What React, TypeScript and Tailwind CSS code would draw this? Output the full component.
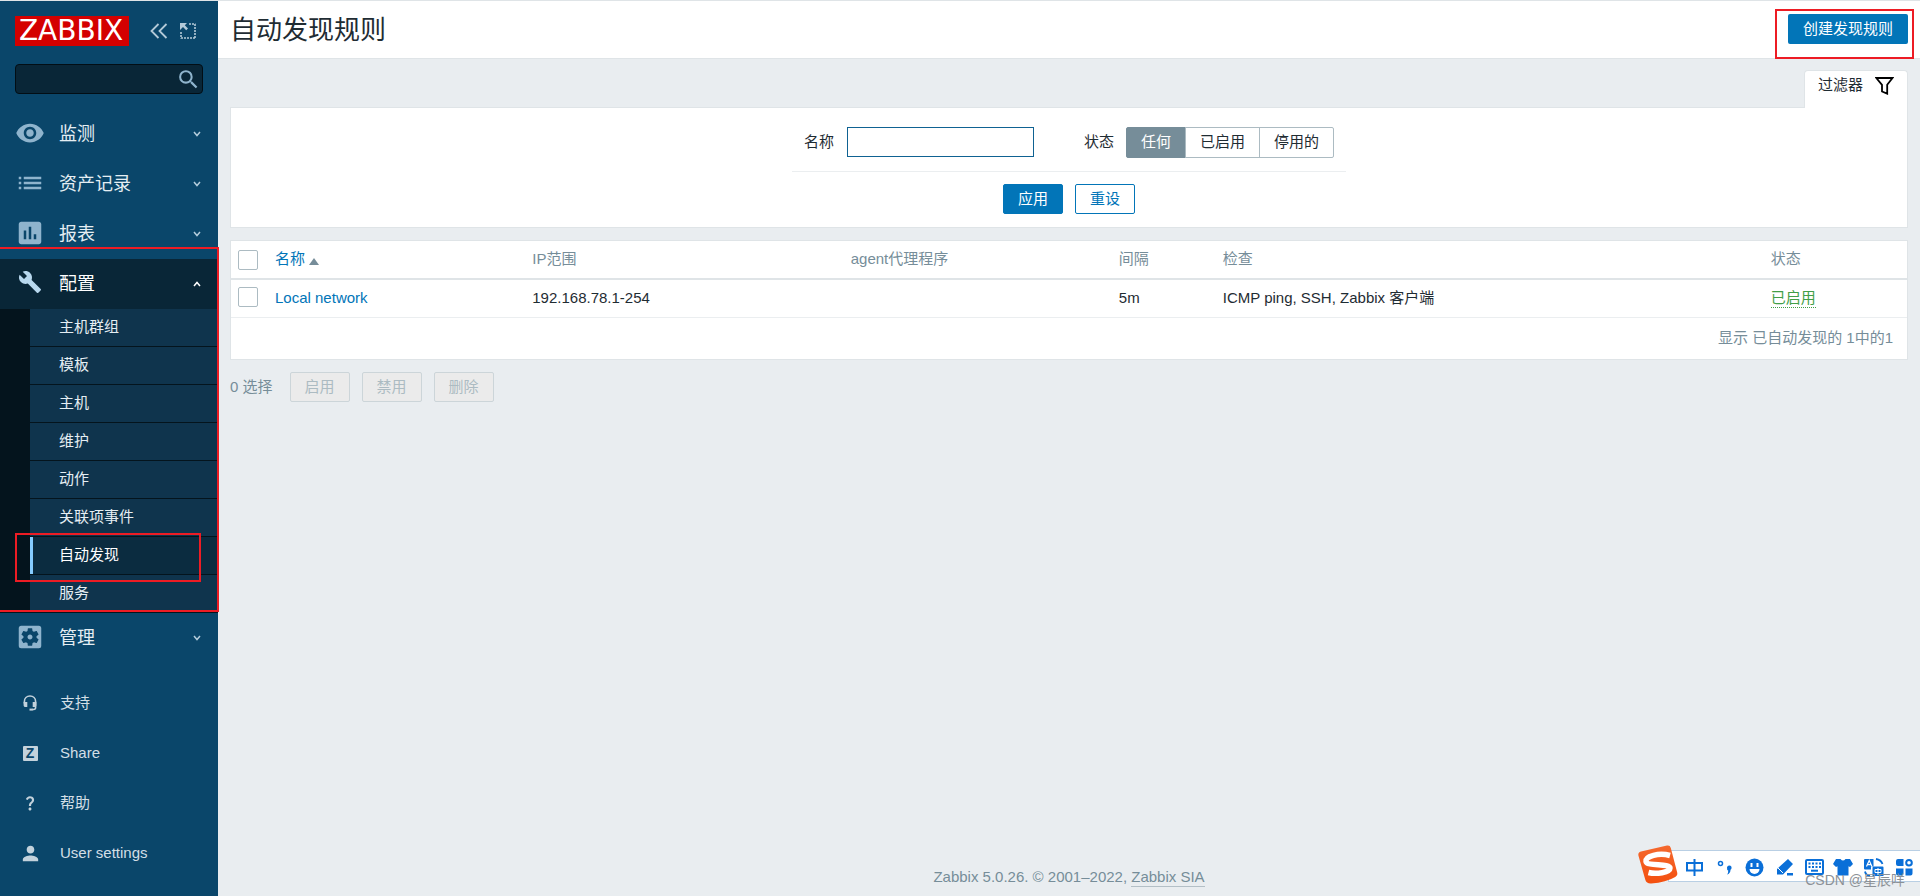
import type { ComponentType, ReactNode } from 'react';
import {
  MdAssessment,
  MdBuild,
  MdList,
  MdPerson,
  MdPowerSettingsNew,
  MdQuestionMark,
  MdRemoveRedEye,
  MdSearch,
  MdSettingsApplications,
} from 'react-icons/md';

interface MenuEntry {
  label: string;
  icon: ComponentType<{ size?: number; className?: string }>;
}

const topMenu: MenuEntry[] = [
  { label: '监测', icon: MdRemoveRedEye },
  { label: '资产记录', icon: MdList },
  { label: '报表', icon: MdAssessment },
];

const configItems = ['主机群组', '模板', '主机', '维护', '动作', '关联项事件', '自动发现', '服务'];
const activeItem = '自动发现';

const statusOptions = ['任何', '已启用', '停用的'];

function Chevron({ up = false }: { up?: boolean }) {
  return (
    <svg width="8" height="6" viewBox="0 0 8 6" fill="none" stroke="currentColor" strokeWidth="1.5">
      <path d={up ? 'M1 5l3-3.5L7 5' : 'M1 1l3 3.5L7 1'} />
    </svg>
  );
}

function HeadsetIcon() {
  return (
    <svg width="14" height="16" viewBox="0 0 14 16" fill="none" stroke="currentColor" strokeWidth="1.6">
      <path d="M1.4 8.5V6.4C1.4 3.3 3.8 1 7 1s5.6 2.3 5.6 5.4v6.1c0 1.2-.8 2-2 2H9" />
      <path d="M.6 7h3.7v5H2.4C1.4 12 .6 11.2.6 10.2zM13.4 7H9.7v5h1.9c1 0 1.8-.8 1.8-1.8z" fill="currentColor" stroke="none" />
      <path d="M6.5 13.6h3.2v2H6.5z" fill="currentColor" stroke="none" />
    </svg>
  );
}

function MenuLink({ entry }: { entry: MenuEntry }) {
  const Icon = entry.icon;
  return (
    <a href="#" className="flex h-[50px] items-center pr-[17px] pl-[15px] text-lg text-[#e5eef3]">
      <Icon size={30} className="mr-3.5 mb-0.5 text-[#8fb4cd]" />
      <span className="grow">{entry.label}</span>
      <span className="text-[#b5cddc]">
        <Chevron />
      </span>
    </a>
  );
}

function SupportLink({ label, children }: { label: string; children: ReactNode }) {
  return (
    <a href="#" className="flex h-[50px] items-center text-[15px] text-[#d3dfe6]">
      <span className="mr-[15px] ml-[15px] flex w-[30px] justify-center text-[#c3d2dc]">{children}</span>
      {label}
    </a>
  );
}

function Sidebar() {
  return (
    <aside className="w-[218px] shrink-0 overflow-y-clip bg-[#0a466a]">
      <div className="flex h-[45px] items-end pl-[15px]">
        <a href="#" className="flex h-[30px] w-[114px] items-center justify-center bg-[#d40000] pr-0.5 font-['DejaVu_Sans',sans-serif] text-[28px] leading-none text-white">
          ZABBIX
        </a>
        <button type="button" aria-label="Collapse sidebar" className="ml-[21px] flex h-[30px] w-[18px] items-center text-[#b4cad8]">
          <svg width="18" height="16" viewBox="0 0 18 16" fill="none" stroke="currentColor" strokeWidth="1.8">
            <path d="M8.500 1L1.500 8l7 7M16.500 1l-7 7 7 7" />
          </svg>
        </button>
        <button type="button" aria-label="Hide sidebar" className="ml-3 flex h-[30px] w-4 items-center text-[#b4cad8]">
          <svg width="16" height="16" viewBox="0 0 16 16" fill="none" stroke="currentColor">
            <path d="M9 1h6.500M15 1v14.500M1 9v6.500M1 15h14" strokeWidth="1.6" strokeDasharray="2 1" />
            <path d="M0 0h7L4.800 2.200 8 5.400 6.200 7.200 3 4 0 7z" fill="currentColor" stroke="none" />
          </svg>
        </button>
      </div>

      <form className="mx-[15px] mt-[18px] flex h-[30px] items-center rounded-sm border border-[#020e15] bg-[#092637]">
        <input type="search" aria-label="Search" className="h-full min-w-0 grow bg-transparent px-2 text-[15px] text-white outline-none" />
        <button type="button" aria-label="Search" className="pr-px text-[#8fb4cd]">
          <MdSearch size={25} />
        </button>
      </form>

      <nav className="mt-[15px]">
        {topMenu.map(entry => (
          <MenuLink key={entry.label} entry={entry} />
        ))}

        {/* Expanded section */}
        <div className="relative">
          <a href="#" className="flex h-[50px] items-center bg-[#092637] pr-[17px] pl-[15px] text-lg text-white">
            <MdBuild size={30} className="mr-3.5 mb-1 p-[3px] text-[#b8d8ee]" />
            <span className="grow">配置</span>
            <Chevron up />
          </a>
          <ul className="flex flex-col gap-px bg-[#04141d] pb-px pl-[30px]">
            {configItems.map(item => (
              <li key={item} className={item === activeItem ? 'relative z-10' : ''}>
                <a
                  href="#"
                  className={
                    item === activeItem
                      ? 'flex h-[37px] items-center border-l-[3px] border-[#85ccff] bg-[#0b2c40] pl-[26px] text-[15px] text-white'
                      : 'flex h-[37px] items-center bg-[#0f344d] pl-[29px] text-[15px] text-[#e5eef3]'
                  }
                >
                  {item}
                </a>
                {item === activeItem && (
                  <div className="pointer-events-none absolute -top-1 right-[17px] -bottom-2 -left-[15px] border-2 border-[#ed1c24]" />
                )}
              </li>
            ))}
          </ul>
          <div className="pointer-events-none absolute -top-3 -right-px bottom-px left-0 z-10 border-2 border-l-0 border-[#ed1c24]" />
        </div>

        <MenuLink entry={{ label: '管理', icon: MdSettingsApplications }} />
      </nav>

      <nav className="mt-[15px]">
        <SupportLink label="支持">
          <HeadsetIcon />
        </SupportLink>
        <SupportLink label="Share">
          <span className="flex size-[15px] items-center justify-center rounded-[1px] bg-[#c3d2dc] text-sm leading-none font-bold text-[#0a466a]">
            Z
          </span>
        </SupportLink>
        <SupportLink label="帮助">
          <MdQuestionMark size={18} />
        </SupportLink>
        <SupportLink label="User settings">
          <MdPerson size={23} />
        </SupportLink>
        <a href="#" aria-label="Sign out" className="flex h-[50px] items-center pl-[21px] text-[#c3d2dc]">
          <MdPowerSettingsNew size={18} />
        </a>
      </nav>
    </aside>
  );
}

function FilterPanel() {
  return (
    <section>
      <div className="flex justify-end">
        <button type="button" className="z-10 -mb-px flex h-[38px] items-center gap-3 rounded-t-sm border border-b-0 border-[#dfe4e7] bg-white px-[13px] pb-2 text-[15px]">
          过滤器
          <svg width="19" height="18" viewBox="0 0 19 18" fill="none" stroke="#000" strokeWidth="1.8">
            <path d="M1.300 1h16.200l-5.300 6.800v8.900L7 14.500V7.800z" />
          </svg>
        </button>
      </div>
      <form className="flex flex-col items-center border border-[#dfe4e7] bg-white pt-[19px] pb-[13px] text-[15px]">
        <div className="flex w-[554px] items-start justify-between border-b border-[#ebeef0] px-3 pb-[13px]">
          <div className="flex items-center gap-[13px]">
            <label htmlFor="filter-name">名称</label>
            <input id="filter-name" type="text" className="h-[30px] w-[187px] border border-[#0f6292] px-1 outline-none" />
          </div>
          <fieldset className="flex items-center">
            <legend className="float-left mr-3">状态</legend>
            <div className="flex">
              {statusOptions.map((option, index) => (
                <label key={option} className="group">
                  <input type="radio" name="status" defaultChecked={index === 0} className="peer sr-only" />
                  <span className="-ml-px flex h-[31px] items-center border border-[#acbbc2] px-3.5 group-first:ml-0 group-first:rounded-l-xs group-last:rounded-r-xs peer-checked:border-[#768d99] peer-checked:bg-[#768d99] peer-checked:text-white">
                    {option}
                  </span>
                </label>
              ))}
            </div>
          </fieldset>
        </div>
        <div className="mt-3 flex gap-3">
          <button type="button" className="h-[30px] w-[60px] rounded-xs border border-[#0275b8] bg-[#0275b8] text-white">
            应用
          </button>
          <button type="button" className="h-[30px] w-[60px] rounded-xs border border-[#0275b8] bg-white text-[#0275b8]">
            重设
          </button>
        </div>
      </form>
    </section>
  );
}

function Checkbox({ label }: { label: string }) {
  return (
    <input
      type="checkbox"
      aria-label={label}
      className="block size-5 appearance-none rounded-xs border border-[#acbbc2] bg-white checked:bg-[#768d99]"
    />
  );
}

function RulesTable() {
  return (
    <div className="mt-3 border border-[#dfe4e7] bg-white">
      <table className="w-full table-fixed text-left text-[15px]">
        <colgroup>
          <col className="w-[39px]" />
          <col className="w-[15.35%]" />
          <col className="w-[19%]" />
          <col className="w-[16%]" />
          <col className="w-[6.2%]" />
          <col className="w-[32.7%]" />
          <col />
        </colgroup>
        <thead>
          <tr className="h-[38px] border-b-2 border-[#dfe4e7] text-[#768d99] *:px-[5px] *:font-normal">
            <th className="pl-[7px]!">
              <Checkbox label="Select all" />
            </th>
            <th>
              <a href="#" className="flex items-center gap-1 text-[#0275b8]">
                名称
                <span className="mt-1 border-x-5 border-b-[7px] border-x-transparent border-b-[#768d99]" />
              </a>
            </th>
            <th>IP范围</th>
            <th>agent代理程序</th>
            <th>间隔</th>
            <th>检查</th>
            <th>状态</th>
          </tr>
        </thead>
        <tbody>
          <tr className="h-[38px] border-b border-[#ebeef0] *:px-[5px]">
            <td className="pb-0.5 pl-[7px]!">
              <Checkbox label="Local network" />
            </td>
            <td>
              <a href="#" className="text-[#0275b8]">Local network</a>
            </td>
            <td>192.168.78.1-254</td>
            <td />
            <td>5m</td>
            <td>ICMP ping, SSH, Zabbix 客户端</td>
            <td>
              <a href="#" className="inline-block border-b border-dotted border-[#429e47] leading-[18px] text-[#429e47]">
                已启用
              </a>
            </td>
          </tr>
        </tbody>
        <tfoot>
          <tr className="h-[42px]">
            <td colSpan={7} className="pr-3.5 text-right text-[#768d99]">
              显示 已自动发现的 1中的1
            </td>
          </tr>
        </tfoot>
      </table>
    </div>
  );
}

// Floating input method toolbar, docked to the window corner
function InputMethodBar() {
  return (
    <div className="absolute right-0 bottom-[14px] h-8 w-[252px] border border-r-0 border-[#b9cfe4] bg-white text-[#0a6fd8]">
      <svg className="absolute -top-[6px] -left-8" width="42" height="39" viewBox="0 0 42 39">
        <defs>
          <linearGradient id="ime-logo" x1="0" y1="0" x2="0" y2="1">
            <stop offset="0" stopColor="#f4692f" />
            <stop offset="1" stopColor="#f4500f" />
          </linearGradient>
        </defs>
        <path d="M4 6.500L30 .6q3-.6 3.800 2.300l6.400 24.600q.7 3-2 4.400-9 5.400-24 6.600-4.700.3-5.900-3.700L1.400 10.600Q.8 7.300 4 6.500z" fill="url(#ime-logo)" />
        <path d="M33 10.500C22 7.500 8 11 9 16.500c.8 5 24 1.500 24 6.500 0 4.500-14 6.500-21.500 4.500" fill="none" stroke="#fff" strokeWidth="5.500" />
      </svg>
      <svg className="absolute top-[7px] left-4" width="230" height="20" viewBox="0 0 230 20" fill="none" stroke="currentColor" strokeWidth="2">
        {/* language */}
        <path d="M2 5h15v7.500H2zM9.500 1v17" />
        {/* punctuation */}
        <circle cx="35.500" cy="5.500" r="2" strokeWidth="1.5" />
        <path d="M42 9.500a2.300 2.300 0 1 1 3.500 2.200Q45.500 15.500 42 16.500q1.500-2 1.200-4Q41.800 12 42 9.500z" fill="currentColor" stroke="none" />
        {/* emoji */}
        <circle cx="69.500" cy="9.500" r="9" fill="currentColor" stroke="none" />
        <path d="M66.500 5v4M72.500 5v4" stroke="#fff" />
        <path d="M64.500 11h10a5 5 0 0 1-10 0z" fill="#fff" stroke="none" />
        {/* pen */}
        <path d="M103 1l5 5-10 10.500h-6v-5.500zM102 15h6v2.500h-6z" fill="currentColor" stroke="none" />
        <path d="M93 10l5 5" stroke="#fff" strokeWidth="1" />
        {/* keyboard */}
        <rect x="121" y="2" width="17" height="14" rx="1" />
        <path d="M123.500 5.500h13M123.500 9h13" strokeDasharray="2 1.5" />
        <path d="M126 12.700h7" />
        {/* skin */}
        <path d="M151 1h4.500q2.500 3 5 0h4.500l3 5-3 3-1.500-.8V17.500h-11V8.200L151 9l-3-3z" fill="currentColor" stroke="none" />
        {/* translate */}
        <path d="M180 1h8.500v7.500H186v3h-6q-1 0-1-1V2q0-1 1-1zM188.500 8.500h9q1 0 1 1v8.500h-11v-8.500z" fill="currentColor" stroke="none" />
        <path d="M181.500 8.500l2.700-6 2.700 6M182.500 6.700h3.500" stroke="#fff" strokeWidth="1.2" />
        <path d="M190 11.500h6v3h-6zM193 10v7" stroke="#fff" strokeWidth="1" />
        <path d="M191 1q5 .8 6.500 5M180 13.500q.5 3.500 5 4.500" strokeWidth="1.8" />
        {/* toolbox */}
        <path d="M213 1h5.500v7H213q-2 0-2-2V3q0-2 2-2zM211 10.500h7.500v5q0 2-2 2H213q-2 0-2-2zM220.500 10.500h7v5q0 2-2 2h-5z" fill="currentColor" stroke="none" />
        <circle cx="224" cy="4.800" r="2.800" />
      </svg>
      <span className="absolute top-[19px] right-[15px] text-sm leading-5 whitespace-nowrap text-[#8c9196]">
        CSDN @星辰咩
      </span>
    </div>
  );
}

export default function App() {
  return (
    <div className="relative flex h-screen overflow-hidden border-t border-[#dfe4e7] bg-[#e9edf0] font-['Liberation_Sans','Noto_Sans_CJK_SC',sans-serif] text-[#1f2c33]">
      <Sidebar />

      <div className="flex min-w-0 grow flex-col">
        <header className="flex h-[58px] items-start justify-between border-b border-[#dfe4e7] bg-white px-3">
          <h1 className="mt-[13px] text-[26px] leading-8">自动发现规则</h1>
          <div className="relative mt-[13px]">
            <button type="button" className="block h-[30px] rounded-xs bg-[#0275b8] px-[15px] text-[15px] text-white">
              创建发现规则
            </button>
            <div className="pointer-events-none absolute -top-[5px] -right-[6px] -bottom-[15px] -left-[13px] border-2 border-[#ed1c24]" />
          </div>
        </header>

        <main className="grow px-3 pt-[11px]">
          <FilterPanel />
          <RulesTable />

          <div className="mt-3 flex items-center gap-3 text-[15px] text-[#768d99]">
            <span className="mr-[5px]">0 选择</span>
            {['启用', '禁用', '删除'].map(action => (
              <button key={action} type="button" disabled className="h-[30px] w-[60px] rounded-xs border border-[#ccd5d9] bg-[#ebebeb] text-[#acbbc2]">
                {action}
              </button>
            ))}
          </div>
        </main>

        <footer className="pb-2 text-center text-[15px] leading-[22px] text-[#768d99]">
          Zabbix 5.0.26. © 2001–2022,{' '}
          <a href="#" className="inline-block border-b border-[#b3bfc6] leading-[18px]">Zabbix SIA</a>
        </footer>
      </div>

      <InputMethodBar />
    </div>
  );
}
